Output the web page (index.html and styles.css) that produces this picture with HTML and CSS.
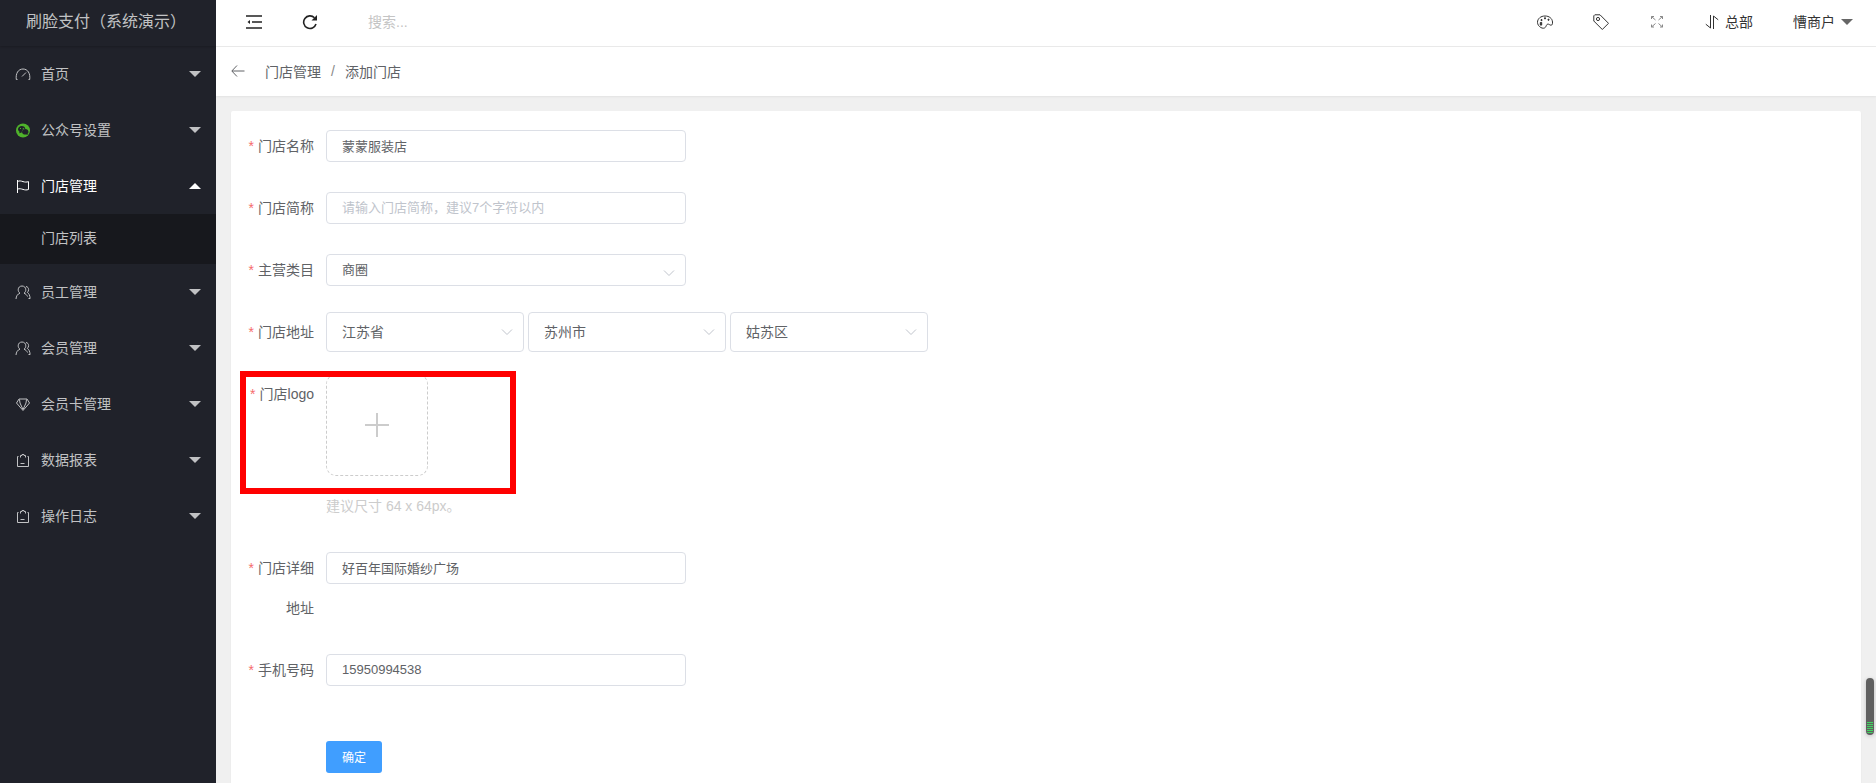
FILE: index.html
```
<!DOCTYPE html>
<html lang="zh-CN">
<head>
    <meta charset="UTF-8">
    <meta name="viewport" content="width=device-width, initial-scale=1.0">
    <title>添加门店</title>
    <link rel="stylesheet" href="styles.css">
</head>
<body>
    <!-- Shared icons -->
    <svg class="sprite" aria-hidden="true">
        <symbol id="icon-user" viewBox="0 0 16 16">
            <path d="M1 15c.2-3 1.600-5 4-5.800C3.700 8.300 3.200 7 3.200 5.800 3.200 3.500 4.800 2 7 2s3.800 1.500 3.800 3.800c0 1.200-.5 2.500-1.800 3.400 1.500.5 2.800 1.700 3.500 3.300"/>
            <path d="M11 2.500c1.700.3 2.600 1.500 2.600 3.100 0 1.200-.5 2.100-1.300 2.800 1.700 1 2.600 3 2.800 6.100h-1.600"/>
        </symbol>
        <symbol id="icon-report" viewBox="0 0 16 16">
            <path d="M3.500 4.500h-1v10h11v-10h-1M5.500 5.500v-2H7v-1h2v1h1.500v2M5.500 11.500h4"/>
        </symbol>
        <symbol id="icon-down" viewBox="0 0 12 12">
            <path d="M1 3.500l5 5 5-5"/>
        </symbol>
    </svg>

    <aside class="sidebar">
        <div class="logo">刷脸支付（系统演示）</div>
        <nav>
            <a href="#" class="menu-item">
                <svg class="icon" viewBox="0 0 16 16"><path d="M2.500 13.500H1.300C.5 7.500 3.200 3 8 3s7.500 4.500 6.700 10.500h-1.200M7 10.500l4-4"/></svg>
                <span class="menu-text">首页</span><span class="caret"></span>
            </a>
            <a href="#" class="menu-item">
                <svg class="icon icon-wechat" viewBox="0 0 16 16">
                    <circle cx="8" cy="8.500" r="7" fill="#4fb32b"/>
                    <path d="M3 7.300c0-2 1.600-3.300 3.700-3.300 2 0 3.500 1.200 3.700 2.800C8 6.800 6.600 8.300 6.800 10.400L4.200 11.200l.4-1.500C3.600 9.200 3 8.200 3 7.300z" fill="#20222a"/>
                    <path d="M7 9.900c0-1.700 1.500-2.900 3.300-2.900s3.200 1.200 3.200 2.900c0 .8-.4 1.500-1 2l.3 1.100-1.400-.5c-2.400.4-4.400-.8-4.400-2.600z" fill="#20222a"/>
                    <path d="M5 6.500h1M7.800 6.500h1" stroke="#4fb32b"/>
                </svg>
                <span class="menu-text">公众号设置</span><span class="caret"></span>
            </a>
            <a href="#" class="menu-item active">
                <svg class="icon" viewBox="0 0 16 16"><path d="M2.500 2v13M2.500 3.500c2-1 3.500-.5 5.500.1s3.500.7 5.500 0v7.900c-2 .7-3.500.5-5.500-.1s-3.500-1-5.500-.3"/></svg>
                <span class="menu-text">门店管理</span><span class="caret"></span>
            </a>
            <a href="#" class="submenu-item">门店列表</a>
            <a href="#" class="menu-item">
                <svg class="icon"><use href="#icon-user"/></svg>
                <span class="menu-text">员工管理</span><span class="caret"></span>
            </a>
            <a href="#" class="menu-item">
                <svg class="icon"><use href="#icon-user"/></svg>
                <span class="menu-text">会员管理</span><span class="caret"></span>
            </a>
            <a href="#" class="menu-item">
                <svg class="icon" viewBox="0 0 16 16"><path d="M4 3h8l2.500 4L8 14.500 1.500 7zM4.500 3.500L5 7l3 6.500L11 7l.5-3.500"/></svg>
                <span class="menu-text">会员卡管理</span><span class="caret"></span>
            </a>
            <a href="#" class="menu-item">
                <svg class="icon"><use href="#icon-report"/></svg>
                <span class="menu-text">数据报表</span><span class="caret"></span>
            </a>
            <a href="#" class="menu-item">
                <svg class="icon"><use href="#icon-report"/></svg>
                <span class="menu-text">操作日志</span><span class="caret"></span>
            </a>
        </nav>
    </aside>

    <div class="main">
        <header class="header">
            <button type="button" class="tool" aria-label="收起菜单">
                <svg class="icon-dark" viewBox="0 0 16 16"><path d="M0 2h16M6 8h10M0 14h16" stroke-width="1.600"/><path d="M4 6v4L1.500 8z" fill="#222" stroke="none"/></svg>
            </button>
            <button type="button" class="tool tool-refresh" aria-label="刷新">
                <svg class="icon-dark" viewBox="0 0 16 16"><path d="M14 10A6.300 6.300 0 1 1 12.500 3.800" stroke-width="1.600"/><path d="M15 1v5.500H9.500z" fill="#222" stroke="none"/></svg>
            </button>
            <input type="text" class="search" placeholder="搜索..." aria-label="搜索">
            <div class="header-right">
                <button type="button" class="tool" aria-label="主题">
                    <svg viewBox="0 0 16 16"><path d="M8 2c4.300 0 7.300 2.500 7.500 6 .1 1.800-.2 3.200-1.500 3.200s-2-1.300-3.200-1.100c-1.500.3-1.400 2-2.400 3.200-1 1.200-3 1.200-4.600.2C1.800 12.300.5 10.500.5 8.300.5 4.600 3.800 2 8 2z"/><path d="M3.300 8.500h1.400v2.600H3.300zM4 5.600h1v1H4zM7.500 3.800h1v1h-1zM11 5.200h1v1h-1z" fill="#333"/></svg>
                </button>
                <button type="button" class="tool" aria-label="便签">
                    <svg viewBox="0 0 16 16"><path d="M.8 1.800l1-1H7L15.500 9.300 9.300 15.500.8 7z"/><circle cx="5" cy="5" r="1.600"/></svg>
                </button>
                <button type="button" class="tool" aria-label="全屏">
                    <svg class="icon-faint" viewBox="0 0 16 16"><path d="M2.500 5V2.500H5M2.500 2.500l4 3.500M11 2.500h2.500V5M13.500 2.500l-4 3.500M2.500 10.500V13H5M2.500 13l4-3.500M13.500 10.500V13H11M13.500 13l-4-3.500"/></svg>
                </button>
                <a href="#" class="branch">
                    <svg viewBox="0 0 14 14"><path d="M5.500 0v13L.8 9.200M8.500 14V1l4.700 3.800"/></svg>
                    <span class="header-text">总部</span>
                </a>
                <a href="#" class="merchant"><span class="header-text">慒商户</span><span class="caret"></span></a>
            </div>
        </header>

        <div class="breadcrumb">
            <a href="#" class="back" aria-label="返回">
                <svg viewBox="0 0 14 14"><path d="M13.500 7H1M6 1.500L.8 7 6 12.500"/></svg>
            </a>
            <a href="#">门店管理</a>
            <span class="slash">/</span>
            <span>添加门店</span>
        </div>

        <div class="content">
            <form class="card">
                <div class="form-item">
                    <label for="name">门店名称</label>
                    <input type="text" id="name" class="field" value="蒙蒙服装店">
                </div>
                <div class="form-item">
                    <label for="short-name">门店简称</label>
                    <input type="text" id="short-name" class="field" placeholder="请输入门店简称，建议7个字符以内">
                </div>
                <div class="form-item">
                    <label for="category">主营类目</label>
                    <div class="select select-small">
                        <select id="category" class="field"><option>商圈</option></select>
                        <svg><use href="#icon-down"/></svg>
                    </div>
                </div>
                <div class="form-item">
                    <label for="province">门店地址</label>
                    <div class="area">
                        <div class="select">
                            <select id="province"><option>江苏省</option></select>
                            <svg><use href="#icon-down"/></svg>
                        </div>
                        <div class="select">
                            <select aria-label="城市"><option>苏州市</option></select>
                            <svg><use href="#icon-down"/></svg>
                        </div>
                        <div class="select">
                            <select aria-label="区县"><option>姑苏区</option></select>
                            <svg><use href="#icon-down"/></svg>
                        </div>
                    </div>
                </div>
                <div class="form-item form-item-logo">
                    <label for="logo">门店logo</label>
                    <div>
                        <button type="button" id="logo" class="upload" aria-label="上传门店logo">
                            <svg viewBox="0 0 24 24"><path d="M12 0v24M0 12h24"/></svg>
                        </button>
                        <p class="hint">建议尺寸 64 x 64px。</p>
                    </div>
                    <div class="highlight"></div>
                </div>
                <div class="form-item">
                    <label for="address">门店详细地址</label>
                    <input type="text" id="address" class="field" value="好百年国际婚纱广场">
                </div>
                <div class="form-item">
                    <label for="phone">手机号码</label>
                    <input type="text" id="phone" class="field" value="15950994538">
                </div>
                <div class="form-actions">
                    <button type="submit" class="btn-primary">确定</button>
                </div>
            </form>
        </div>
    </div>

    <div class="meter"><div class="meter-level"></div></div>
</body>
</html>
```
FILE: styles.css
```
* {
    box-sizing: border-box;
}

body {
    margin: 0;
    display: flex;
    height: 100vh;
    overflow: hidden;
    font-family: "Liberation Sans", "Noto Sans CJK SC", sans-serif;
    font-size: 14px;
    color: #606266;
    background: #f0f0f0;
}

a {
    color: inherit;
    text-decoration: none;
}

button,
input,
select {
    font-family: inherit;
}

svg {
    fill: none;
    stroke: currentColor;
}

.sprite {
    display: none;
}

.caret {
    border: 6px solid transparent;
    border-top-color: currentColor;
    border-bottom: 0;
}

/* Sidebar */
.sidebar {
    flex: none;
    width: 216px;
    background: #20222a;
    color: #c1c2c4;
}

.logo {
    height: 46px;
    padding-left: 26px;
    line-height: 44px;
    font-size: 16px;
    box-shadow: 0 1px 2px rgba(0, 0, 0, 0.2);
}

.menu-item {
    display: flex;
    align-items: center;
    height: 56px;
    padding: 0 15px;
}

.menu-item .icon {
    width: 16px;
    height: 16px;
    margin-right: 10px;
}

.menu-item .icon-wechat {
    stroke: none;
}

.menu-text,
.header-text {
    padding-bottom: 2px;
}

.menu-item .caret {
    margin-left: auto;
}

.menu-item.active {
    color: #fff;
}

.menu-item.active .caret {
    border: 6px solid transparent;
    border-top: 0;
    border-bottom-color: currentColor;
}

.submenu-item {
    display: block;
    height: 50px;
    padding-left: 41px;
    line-height: 48px;
    background: #17181d;
}

/* Header */
.main {
    flex: 1;
    min-width: 0;
    display: flex;
    flex-direction: column;
}

.header {
    flex: none;
    display: flex;
    align-items: center;
    height: 47px;
    padding: 0 23px 3px 30px;
    border-bottom: 1px solid #eaeaea;
    background: #fff;
    color: #333;
}

.tool {
    display: flex;
    padding: 0;
    border: 0;
    background: none;
    color: #333;
    cursor: pointer;
}

.tool svg {
    width: 16px;
    height: 16px;
}

.tool .icon-dark {
    color: #222;
}

.tool .icon-faint {
    color: #888;
}

.tool-refresh {
    margin: 0 50px 0 40px;
}

.search {
    width: 200px;
    padding: 0;
    border: 0;
    font-size: 14px;
    outline: none;
}

.search::placeholder {
    color: #c4c4c4;
}

.header-right {
    display: flex;
    align-items: center;
    gap: 40px;
    margin-left: auto;
}

.branch,
.merchant {
    display: flex;
    align-items: center;
    gap: 6px;
}

.branch svg {
    width: 14px;
    height: 14px;
}

.merchant .caret {
    color: #666;
}

/* Breadcrumb */
.breadcrumb {
    flex: none;
    display: flex;
    align-items: center;
    height: 49px;
    padding: 0 0 2px 15px;
    background: #fff;
    box-shadow: 0 1px 2px rgba(0, 0, 0, 0.06);
}

.back {
    display: flex;
    margin-right: 20px;
}

.back svg {
    width: 14px;
    height: 14px;
}

.slash {
    margin: 0 10px;
    color: #888;
}

/* Form */
.content {
    flex: 1;
    min-height: 0;
    padding: 15px 15px 0;
    overflow: hidden;
}

.card {
    min-height: 100%;
    padding: 15px;
    border-radius: 2px;
    background: #fff;
    box-shadow: 0 1px 2px rgba(0, 0, 0, 0.05);
}

.form-item {
    display: flex;
    align-items: flex-start;
    margin-bottom: 22px;
}

.form-item label {
    flex: none;
    width: 80px;
    padding-right: 12px;
    line-height: 40px;
    text-align: right;
}

.form-item label::before {
    content: "*";
    margin-right: 4px;
    color: #f56c6c;
}

.form-item input,
.form-item select {
    padding: 0 15px 2px;
    border: 1px solid #dcdfe6;
    border-radius: 4px;
    background: #fff;
    color: #606266;
    outline: none;
}

.form-item .field {
    width: 360px;
    height: 32px;
    margin: 4px 0;
    font-size: 13px;
}

.form-item input::placeholder {
    color: #c0c4cc;
}

.area {
    display: flex;
    gap: 4px;
}

.select {
    position: relative;
}

.select select {
    display: block;
    appearance: none;
}

.area select {
    width: 198px;
    height: 40px;
    padding-bottom: 0;
    font-size: 14px;
}

.select svg {
    position: absolute;
    top: 14px;
    right: 11px;
    width: 12px;
    height: 12px;
    color: #c0c4cc;
    pointer-events: none;
}

.select-small svg {
    top: 17px;
}

.form-item-logo {
    position: relative;
}

.upload {
    display: flex;
    align-items: center;
    justify-content: center;
    width: 102px;
    height: 102px;
    margin-bottom: 10px;
    border: 1px dashed #ccc;
    border-radius: 10px;
    background: #fff;
    color: #ccc;
    cursor: pointer;
}

.upload svg {
    width: 24px;
    height: 24px;
    stroke-width: 2;
}

.hint {
    margin: 0;
    line-height: 40px;
    color: #ccc;
}

/* Red frame around the logo field */
.highlight {
    position: absolute;
    top: -3px;
    left: -6px;
    width: 276px;
    height: 123px;
    border: 6px solid #f00;
    pointer-events: none;
}

.form-actions {
    padding: 29px 0 0 80px;
}

.btn-primary {
    width: 56px;
    height: 32px;
    padding: 0 0 2px;
    border: 0;
    border-radius: 3px;
    background: #409eff;
    color: #fff;
    font-size: 12px;
    cursor: pointer;
}

/* Level meter at the window edge */
.meter {
    position: fixed;
    right: 2px;
    bottom: 48px;
    display: flex;
    align-items: flex-end;
    width: 8px;
    height: 57px;
    padding: 1px;
    border-radius: 4px;
    background: #606060;
    box-shadow: 0 1px 4px rgba(0, 0, 0, 0.2);
}

.meter-level {
    width: 6px;
    height: 12px;
    border-radius: 0 0 3px 3px;
    background: repeating-linear-gradient(#3fd65f 0 1px, #606060 1px 2px);
}
```
